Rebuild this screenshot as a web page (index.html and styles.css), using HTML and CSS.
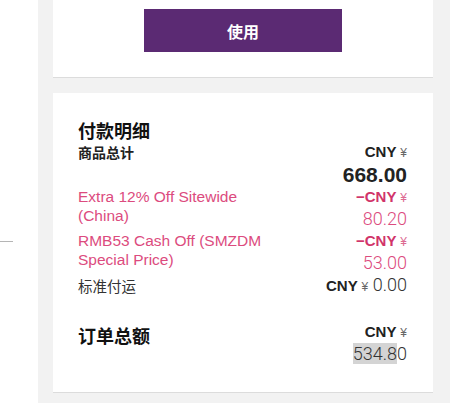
FILE: index.html
```html
<!DOCTYPE html>
<html lang="zh-CN">
<head>
  <meta charset="UTF-8" />
  <meta name="viewport" content="width=device-width, initial-scale=1.0"/>
  <title>付款明细</title>
  <link rel="stylesheet" href="styles.css">
</head>
<body>

  <div class="page">
    <!-- Left strip -->
    <div class="side">
      <div class="side-rule"></div>
    </div>

    <div class="main">
      <!-- Coupon card -->
      <div class="card coupon-card">
        <button class="use-btn" type="button">使用</button>
      </div>

      <!-- Payment details -->
      <div class="card summary-card">
        <h2 class="summary-title">付款明细</h2>

        <div class="row">
          <div class="label label-strong">商品总计</div>
          <div class="amount">
            <div class="cur">CNY <span class="yen">¥</span></div>
            <div class="num num-bold">668.00</div>
          </div>
        </div>

        <div class="row discount">
          <div class="label">Extra 12% Off Sitewide (China)</div>
          <div class="amount">
            <div class="cur">&minus;CNY <span class="yen">¥</span></div>
            <div class="num">80.20</div>
          </div>
        </div>

        <div class="row discount">
          <div class="label">RMB53 Cash Off (SMZDM Special Price)</div>
          <div class="amount">
            <div class="cur">&minus;CNY <span class="yen">¥</span></div>
            <div class="num">53.00</div>
          </div>
        </div>

        <div class="row">
          <div class="label label-plain">标准付运</div>
          <div class="amount amount-inline">
            <span class="cur">CNY <span class="yen">¥</span></span>
            <span class="num">0.00</span>
          </div>
        </div>

        <div class="row total-row">
          <div class="label total-label">订单总额</div>
          <div class="amount">
            <div class="cur">CNY <span class="yen">¥</span></div>
            <div class="num"><span class="selected">534.8</span>0</div>
          </div>
        </div>
      </div>
    </div>
  </div>

</body>
</html>
```

FILE: styles.css
```css
* {
  box-sizing: border-box;
}

body {
  margin: 0;
  font-family: 'Liberation Sans', 'Noto Sans CJK SC', sans-serif;
  background-color: #fff;
  color: #222;
}

.page {
  display: flex;
  min-height: 403px;
}

/* Left strip */
.side {
  width: 38px;
  flex: none;
  background-color: #fff;
}

.side-rule {
  width: 13px;
  margin-top: 241px;
  border-top: 1px solid #b5b5b5;
}

/* Main column */
.main {
  flex: 1;
  background-color: #f2f2f2;
  padding: 0 17px 0 15px;
}

.card {
  background-color: #fff;
  border-bottom: 1px solid #dcdcdc;
}

.coupon-card {
  display: flex;
  justify-content: center;
  padding: 9px 0 25px;
  margin-bottom: 15px;
}

.use-btn {
  width: 198px;
  height: 43px;
  border: none;
  background-color: #5b2a73;
  color: #fff;
  font-family: 'Noto Sans CJK SC', sans-serif;
  font-size: 16px;
  font-weight: 700;
  cursor: pointer;
}

/* Summary */
.summary-card {
  padding: 25px 26px 26px 25px;
}

.summary-title {
  margin: 0;
  font-family: 'Noto Sans CJK SC', sans-serif;
  font-size: 18px;
  font-weight: 700;
  line-height: 24px;
  color: #111;
}

.row {
  display: flex;
  gap: 25px;
}

.label {
  flex: 1;
  font-size: 15.5px;
  line-height: 19px;
}

.label-strong {
  font-family: 'Noto Sans CJK SC', sans-serif;
  font-size: 14px;
  font-weight: 700;
  line-height: 20px;
  color: #222;
}

.label-plain {
  font-family: 'Noto Sans CJK SC', sans-serif;
  font-size: 14.5px;
  line-height: 22px;
  color: #333;
}

.amount {
  width: 100px;
  flex: none;
  text-align: right;
}

.cur {
  font-size: 15px;
  font-weight: 700;
  line-height: 20px;
  color: #222;
}

.yen {
  font-size: 12px;
  font-weight: 400;
  line-height: 1;
  color: #666;
}

.num {
  font-family: Roboto, 'Liberation Sans', sans-serif;
  font-size: 18px;
  font-weight: 300;
  line-height: 24px;
  color: #333;
}

.num-bold {
  font-family: 'Liberation Sans', sans-serif;
  font-size: 21px;
  font-weight: 700;
  line-height: 25px;
  color: #222;
}

/* Discount rows */
.discount .label,
.discount .num {
  color: #dc4b7e;
}

.discount .cur {
  color: #d1346a;
}

.discount .yen {
  color: #dc6a92;
}

.amount-inline {
  line-height: 22px;
}

.amount-inline .cur,
.amount-inline .num {
  line-height: 1;
}

/* Total */
.total-row {
  margin-top: 25px;
}

.total-label {
  font-family: 'Noto Sans CJK SC', sans-serif;
  font-size: 18px;
  font-weight: 700;
  line-height: 26px;
  color: #111;
}

.selected {
  background-color: #d4d4d4;
}
```
